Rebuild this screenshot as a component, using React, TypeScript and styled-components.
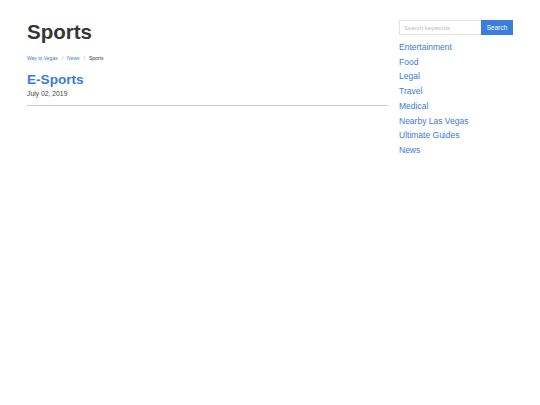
import styled, { createGlobalStyle } from 'styled-components'

const Global = createGlobalStyle`
  html, body { margin: 0; padding: 0; background: #fff; }
  body { font-family: "Liberation Sans", Arial, sans-serif; color: #333; }
`

const Page = styled.div`
  display: flex;
  align-items: flex-start;
  gap: 11px;
  padding: 20px 27px 0 27px;
  width: 540px;
  box-sizing: border-box;
`

const Main = styled.main`
  width: 361px;
`

const Title = styled.h1`
  margin: 0;
  font-size: 20.5px;
  font-weight: 700;
  line-height: 24px;
  color: #363636;
`

const Crumbs = styled.nav`
  display: flex;
  align-items: center;
  gap: 4px;
  margin-top: 10px;
  font-size: 5px;
  line-height: 8px;
`

const Crumb = styled.a<{ $active?: boolean }>`
  color: ${p => (p.$active ? '#333' : '#3a7bd5')};
  text-decoration: none;
`

const Sep = styled.span`
  color: #aaa;
`

const PostTitle = styled.a`
  display: block;
  margin-top: 10px;
  font-size: 13.6px;
  font-weight: 700;
  line-height: 16px;
  color: #3a7bd5;
  text-decoration: none;
`

const PostDate = styled.div`
  margin-top: 1px;
  font-size: 6.8px;
  line-height: 10px;
  color: #444;
`

const Rule = styled.hr`
  margin: 6px 0 0;
  border: 0;
  border-top: 1px solid #ccc;
`

const Side = styled.aside`
  width: 114px;
`

const SearchForm = styled.form`
  display: flex;
  height: 15px;
`

const SearchInput = styled.input`
  box-sizing: border-box;
  width: 82px;
  height: 15px;
  margin: 0;
  padding: 0 4px;
  border: 1px solid #e3e3e3;
  border-right: 0;
  font-family: inherit;
  font-size: 6px;
  color: #333;
  outline: none;
  &::placeholder { color: #bbb; }
`

const SearchButton = styled.button`
  width: 32px;
  height: 15px;
  margin: 0;
  padding: 0;
  border: 0;
  background: #3b7ddd;
  color: #fff;
  font-family: inherit;
  font-size: 6.5px;
`

const Cats = styled.ul`
  list-style: none;
  margin: 5px 0 0;
  padding: 0;
`

const Cat = styled.li`
  font-size: 8.5px;
  line-height: 14.7px;
  a {
    color: #3a7bd5;
    text-decoration: none;
  }
`

const categories = [
  'Entertainment',
  'Food',
  'Legal',
  'Travel',
  'Medical',
  'Nearby Las Vegas',
  'Ultimate Guides',
  'News',
]

export default function App() {
  return (
    <>
      <Global />
      <Page>
        <Main>
          <Title>Sports</Title>
          <Crumbs>
            <Crumb href="#">Way to Vegas</Crumb>
            <Sep>/</Sep>
            <Crumb href="#">News</Crumb>
            <Sep>/</Sep>
            <Crumb $active>Sports</Crumb>
          </Crumbs>
          <PostTitle href="#">E-Sports</PostTitle>
          <PostDate>July 02, 2019</PostDate>
          <Rule />
        </Main>
        <Side>
          <SearchForm onSubmit={e => e.preventDefault()}>
            <SearchInput placeholder="Search keywords" />
            <SearchButton type="submit">Search</SearchButton>
          </SearchForm>
          <Cats>
            {categories.map(c => (
              <Cat key={c}>
                <a href="#">{c}</a>
              </Cat>
            ))}
          </Cats>
        </Side>
      </Page>
    </>
  )
}
